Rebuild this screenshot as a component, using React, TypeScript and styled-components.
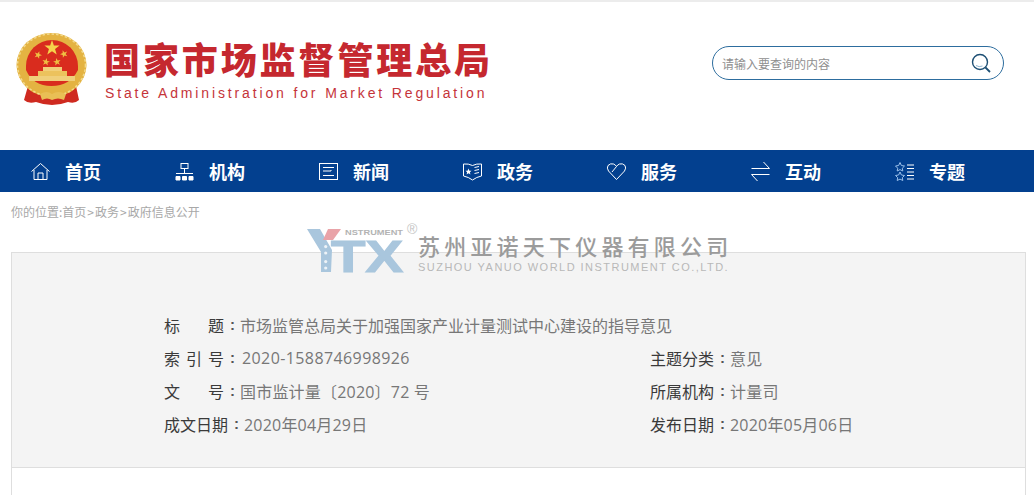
import React from "react";
import styled, { createGlobalStyle } from "styled-components";

const CJK = `"Noto Sans CJK SC", sans-serif`;
const LATIN_CJK = `"Open Sans", "Noto Sans CJK SC", sans-serif`;

const GlobalStyle = createGlobalStyle`
  html, body {
    margin: 0;
    padding: 0;
    background: #fff;
    overflow: hidden;
  }
  body {
    font-family: ${LATIN_CJK};
  }
`;

const Page = styled.div`
  position: relative;
  width: 1034px;
  height: 495px;
  overflow: hidden;
  border-top: 2px solid #ececec;
  box-sizing: border-box;
`;

const Header = styled.header`
  height: 148px;
  display: flex;
  align-items: flex-start;
  justify-content: space-between;
  padding: 29px 30px 0 15px;
  box-sizing: border-box;
`;

const Brand = styled.div`
  display: flex;
  align-items: flex-start;
  gap: 15px;
`;

const BrandText = styled.div`
  display: flex;
  flex-direction: column;
  padding-top: 5px;
`;

const BrandTitle = styled.div`
  font-family: ${CJK};
  font-size: 36px;
  line-height: 44px;
  font-weight: 900;
  letter-spacing: 2.9px;
  color: #c5282f;
  white-space: nowrap;
`;

const BrandSub = styled.div`
  font-family: "Liberation Sans", sans-serif;
  font-size: 14px;
  line-height: 18px;
  letter-spacing: 2.86px;
  color: #c5343a;
  margin-top: 4px;
  padding-left: 1px;
  white-space: nowrap;
`;

const SearchBox = styled.form`
  width: 292px;
  height: 34px;
  margin-top: 15px;
  border: 1px solid #2d6d9e;
  border-radius: 17px;
  box-sizing: border-box;
  display: flex;
  align-items: center;
  padding: 0 12px 0 9px;
`;

const SearchInput = styled.input`
  flex: 1;
  border: 0;
  outline: 0;
  padding: 0;
  background: transparent;
  font-family: ${CJK};
  font-size: 12px;
  &::placeholder {
    color: #8f8f8f;
    opacity: 1;
  }
`;

const Nav = styled.nav`
  height: 42px;
  background: #03408f;
  display: flex;
  padding-left: 30px;
`;

const NavItem = styled.a`
  flex: none;
  width: 144px;
  display: flex;
  align-items: center;
  gap: 14px;
  color: #fff;
  font-family: ${CJK};
  font-size: 18px;
  font-weight: 700;
  text-decoration: none;
`;

const NavIcon = styled.svg`
  width: 21px;
  height: 21px;
  fill: none;
  stroke: #fff;
  stroke-width: 1;
  flex: none;
`;

const Crumbs = styled.div`
  height: 60px;
  padding: 0 0 22px 11px;
  box-sizing: border-box;
  display: flex;
  align-items: center;
  font-family: ${CJK};
  font-size: 12px;
  color: #a8a8a8;
`;

const CrumbSep = styled.span`
  padding: 0 1px;
`;

const Article = styled.main`
  margin-left: 11px;
  width: 1015px;
  height: 260px;
  box-sizing: border-box;
  border: 1px solid #dedede;
  border-bottom: 0;
`;

const Meta = styled.section`
  background: #f4f4f4;
  border-bottom: 1px solid #dedede;
  padding: 55px 0 27px 152px;
  display: grid;
  grid-template-columns: 486px 1fr;
  grid-auto-rows: 33px;
`;

const MetaRow = styled.div<{ $wide?: boolean }>`
  display: flex;
  align-items: center;
  font-size: 16px;
  white-space: nowrap;
  grid-column: ${(p) => (p.$wide ? "1 / -1" : "auto")};
`;

const MetaLabel = styled.span`
  font-family: ${CJK};
  color: #3a3a3a;
  min-width: 60px;
  text-align-last: justify;
`;

const MetaColon = styled.span`
  color: #555;
  font-family: "Liberation Sans", sans-serif;
  font-weight: 700;
  font-size: 15px;
  padding: 0 5px 0 6px;
`;

const MetaValue = styled.span<{ $track: number; $inset: number }>`
  color: #777;
  font-family: ${LATIN_CJK};
  letter-spacing: ${(p) => p.$track}px;
  margin-left: ${(p) => p.$inset}px;
`;

const Watermark = styled.div`
  position: absolute;
  left: 307px;
  top: 218px;
  display: flex;
  align-items: flex-start;
  pointer-events: none;
`;

const MarkText = styled.div`
  display: flex;
  flex-direction: column;
  padding-top: 11px;
`;

const MarkName = styled.div`
  font-family: ${CJK};
  font-size: 22px;
  line-height: 28px;
  font-weight: 500;
  letter-spacing: 4.2px;
  color: #9b9b9b;
  white-space: nowrap;
`;

const MarkSub = styled.div`
  font-family: "Liberation Sans", sans-serif;
  font-size: 11px;
  line-height: 12px;
  margin-top: 2px;
  letter-spacing: 1.47px;
  color: #b8b8b8;
  white-space: nowrap;
`;

const Star = ({ x, y, r, rot = 0, fill }: { x: number; y: number; r: number; rot?: number; fill: string }) => {
  const pts = Array.from({ length: 10 }, (_, i) => {
    const a = ((i * 36 + rot - 90) * Math.PI) / 180;
    const d = i % 2 ? r * 0.4 : r;
    return `${(x + d * Math.cos(a)).toFixed(2)},${(y + d * Math.sin(a)).toFixed(2)}`;
  }).join(" ");
  return <polygon points={pts} fill={fill} />;
};

// viewBox uses page coordinates so the parts can be read off the screenshot
const Emblem = () => (
  <svg width="74" height="76" viewBox="15 31 74 76" style={{ flex: "none" }}>
    <path d="M28 86 L24 100 Q28 104 36 102 Q52 108 68 102 Q75 104 79 100 L76 86 Z" fill="#cf2a20" />
    <ellipse cx="51.500" cy="65" rx="35" ry="32" fill="#e4b342" />
    <ellipse cx="51.500" cy="65" rx="34" ry="31" fill="none" stroke="#f3da8c" strokeWidth="1.600" strokeDasharray="2.500 2" />
    <path d="M26 66 A26 26 0 0 1 78 66 L78 70 Q70 86 51.500 86 Q33 86 26 70 Z" fill="#d92c1e" />
    <Star x={52} y={48} r={8} fill="#f6d24b" />
    <Star x={38} y={55} r={4} rot={20} fill="#efc043" />
    <Star x={64} y={54} r={4} rot={-20} fill="#efc043" />
    <Star x={46} y={62} r={4} rot={10} fill="#efc043" />
    <Star x={57} y={62} r={4} rot={-10} fill="#efc043" />
    <rect x="43" y="67" width="19" height="4" fill="#f2cf7a" />
    <rect x="38" y="71" width="29" height="5" fill="#ecc25d" />
    <rect x="29" y="76" width="46" height="5" fill="#f0cf7b" />
    <path d="M27 81 Q51 95 77 81 L74 88 Q51 99 30 88 Z" fill="#e4b342" />
    <path d="M40 94 Q47 90 52 94 Q58 90 66 94 L64 100 Q58 97 52 100 Q47 97 42 100 Z" fill="#e9bf55" />
  </svg>
);

const VtxLogo = () => (
  <svg width="111" height="52" viewBox="0 0 111 52" style={{ flex: "none", overflow: "visible" }}>
    <polygon points="0,9 13,9 25,30 24,52 14,52 14,32" fill="#a9c6dd" />
    <polygon points="21,9 34,9 26,20 16,20" fill="#e9a3a8" />
    <circle cx="18.700" cy="26.600" r="1.600" fill="#eef3f7" />
    <circle cx="18.700" cy="33" r="1.600" fill="#eef3f7" />
    <circle cx="18.700" cy="41.600" r="1.600" fill="#eef3f7" />
    <circle cx="18.700" cy="48" r="1.600" fill="#eef3f7" />
    <text x="24" y="52" fontFamily="Liberation Sans" fontWeight="700" fontSize="45" textLength="72" lengthAdjust="spacingAndGlyphs" fill="#a9c6dd" stroke="#a9c6dd" strokeWidth="1.200">TX</text>
    <text x="38" y="15" fontFamily="Liberation Sans" fontWeight="700" fontSize="8" textLength="58" lengthAdjust="spacingAndGlyphs" fill="#b3b3b3">NSTRUMENT</text>
    <text x="100" y="14" fontFamily="Liberation Sans" fontSize="14" fill="#c4c4c4">®</text>
  </svg>
);

const navItems = [
  {
    label: "首页",
    icon: (
      <>
        <path d="M1.500 10.500 10.500 2.500l9 8" />
        <path d="M4 9v9.500h13V9" />
        <path d="M8 18.500v-6.500h5v6.500" />
      </>
    ),
  },
  {
    label: "机构",
    icon: (
      <>
        <rect x="7" y="2.500" width="7" height="5" />
        <path d="M10.500 7.500v5M2 12.500h17" />
        <path d="M2 15.500h4v3.500h-4zM8.500 15.500h4v3.500h-4zM15 15.500h4v3.500h-4z" fill="#fff" />
      </>
    ),
  },
  {
    label: "新闻",
    icon: (
      <>
        <rect x="1.500" y="2.500" width="18" height="16" />
        <path d="M5 6.500h11M5 10h8M13 10v-1M5 14.500h11" />
      </>
    ),
  },
  {
    label: "政务",
    icon: (
      <>
        <path d="M1.500 3q5-.5 9 1.500q4-2 9-1.500v12q-5 1-9 4q-4-3-9-4z" />
        <path d="M12.500 6.500 17 5.500M12.500 9.500l4.500-1M12.500 12.500l4.500-1" />
        <polygon points="6.500,7.500 7.400,9.700 9.500,9.800 7.900,11.200 8.400,13.400 6.500,12.200 4.600,13.400 5.100,11.200 3.500,9.800 5.600,9.700" fill="#fff" stroke="none" />
      </>
    ),
  },
  {
    label: "服务",
    icon: (
      <>
        <path d="M10.500 18.500 2.500 10Q.5 7 2 4.500Q4.500 2 7.500 3Q9.500 3.800 10.500 5.500Q11.500 3.800 13.500 3Q16.500 2 19 4.500Q20.500 7 18.500 10Z" />
        <path d="M10.500 5.500 6 11" />
      </>
    ),
  },
  {
    label: "互动",
    icon: <path d="M1.500 7.500h18L13.500 1M19.500 13.500h-18L7.500 20" />,
  },
  {
    label: "专题",
    icon: (
      <>
        <polygon points="6,1.500 7.400,4.500 10.500,5 8.300,7.200 8.800,10 6,8.600 3.200,10 3.700,7.200 1.500,5 4.600,4.500" stroke="#9cc0ea" />
        <polygon points="6,11 7.400,14 10.500,14.500 8.300,16.700 8.800,19.500 6,18.100 3.200,19.500 3.700,16.700 1.500,14.500 4.600,14" stroke="#9cc0ea" />
        <path d="M13 4h7M13 7.500h7M13 11h7M13 14.500h7M13 18h7" />
      </>
    ),
  },
];

const metaRows: { label: string; value: string; wide?: boolean; track?: number; inset?: number }[] = [
  { label: "标题", value: "市场监管总局关于加强国家产业计量测试中心建设的指导意见", wide: true, track: 0 },
  { label: "索引号", value: "2020-1588746998926", track: 0.4, inset: 2 },
  { label: "主题分类", value: "意见" },
  { label: "文号", value: "国市监计量〔2020〕72 号" },
  { label: "所属机构", value: "计量司" },
  { label: "成文日期", value: "2020年04月29日" },
  { label: "发布日期", value: "2020年05月06日" },
];

export default function App() {
  return (
    <Page>
      <GlobalStyle />
      <Header>
        <Brand>
          <Emblem />
          <BrandText>
            <BrandTitle>国家市场监督管理总局</BrandTitle>
            <BrandSub>State Administration for Market Regulation</BrandSub>
          </BrandText>
        </Brand>
        <SearchBox>
          <SearchInput placeholder="请输入要查询的内容" />
          <svg width="20" height="20" viewBox="0 0 20 20" fill="none" stroke="#1d4f74">
            <circle cx="9" cy="9" r="7.500" strokeWidth="1.400" />
            <path d="M14.500 14.500 19 19" strokeWidth="1.800" />
            <path d="M5 12.500q3 2 6.500.5" stroke="#8fb4cf" strokeWidth="1" />
          </svg>
        </SearchBox>
      </Header>
      <Nav>
        {navItems.map((item) => (
          <NavItem key={item.label}>
            <NavIcon viewBox="0 0 21 21">{item.icon}</NavIcon>
            {item.label}
          </NavItem>
        ))}
      </Nav>
      <Crumbs>
        你的位置:首页<CrumbSep>&gt;</CrumbSep>政务<CrumbSep>&gt;</CrumbSep>政府信息公开
      </Crumbs>
      <Article>
        <Meta>
          {metaRows.map((row) => (
            <MetaRow key={row.label} $wide={row.wide}>
              <MetaLabel>{row.label}</MetaLabel>
              <MetaColon>:</MetaColon>
              <MetaValue $track={row.track ?? 0.2} $inset={row.inset ?? 0}>
                {row.value}
              </MetaValue>
            </MetaRow>
          ))}
        </Meta>
      </Article>
      <Watermark>
        <VtxLogo />
        <MarkText>
          <MarkName>苏州亚诺天下仪器有限公司</MarkName>
          <MarkSub>SUZHOU YANUO WORLD INSTRUMENT CO.,LTD.</MarkSub>
        </MarkText>
      </Watermark>
    </Page>
  );
}
